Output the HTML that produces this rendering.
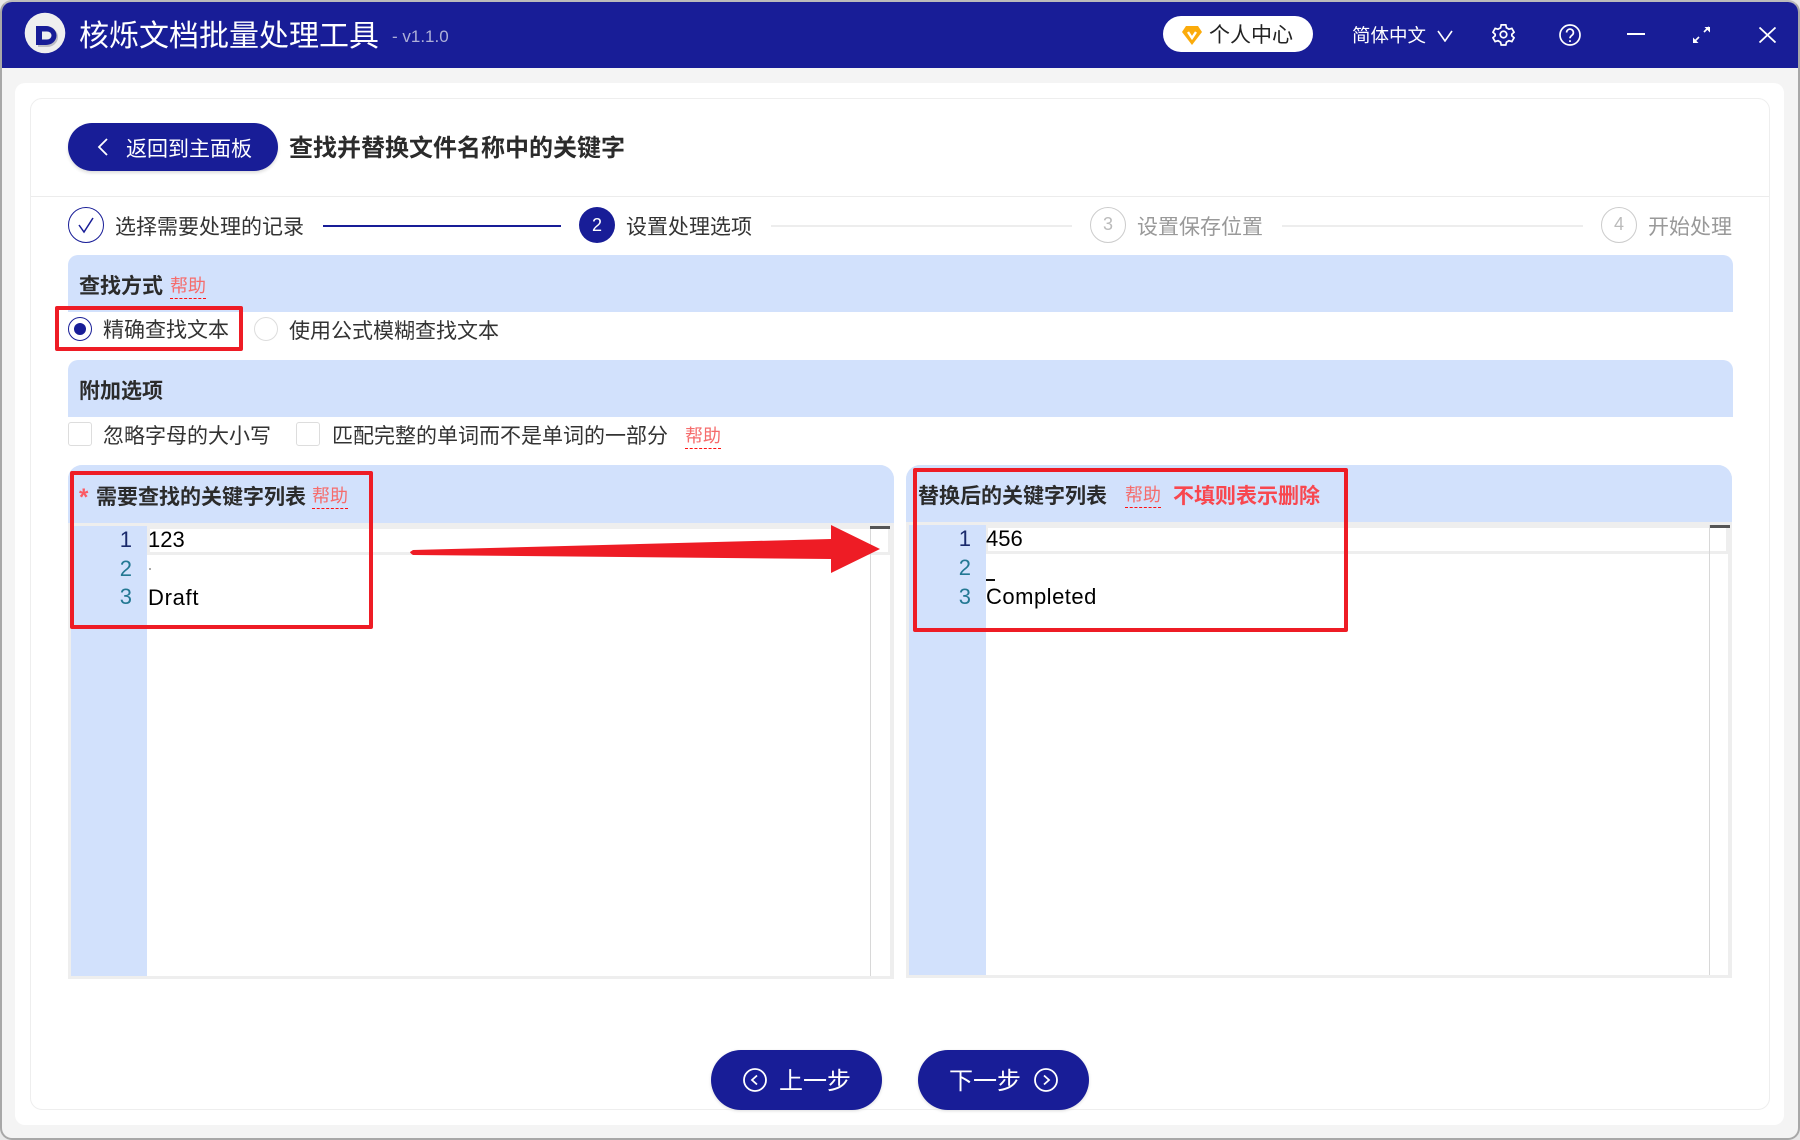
<!DOCTYPE html>
<html lang="zh"><head><meta charset="utf-8"><title>核烁文档批量处理工具</title>
<style>
*{box-sizing:border-box;margin:0;padding:0}
html,body{width:1800px;height:1140px;overflow:hidden;background:#e8e8e8;font-family:"Liberation Sans","Noto Sans CJK SC",sans-serif;color:#333}
.a{position:absolute}
.t{position:absolute;white-space:nowrap;line-height:30px;height:30px;font-size:21px;margin-top:2px}
.b{font-weight:700;color:#2b2b2b}
.h{position:absolute;white-space:nowrap;font-size:18px;line-height:24px;color:#f56c6c;border-bottom:1px dashed #f11;height:25px}
.band{position:absolute;background:#d2e1fc}
.c{position:absolute;width:36px;height:36px;border-radius:50%;text-align:center;line-height:36px;font-size:18px}
.red{position:absolute;border:4px solid #ee1c25;border-radius:2px}
.n{position:absolute;font-size:22px;line-height:28px;width:30px;text-align:right;color:#237893}
.code{position:absolute;font-size:22px;line-height:28px;color:#000;white-space:nowrap}
.pill{position:absolute;background:#181d97;color:#fff;border-radius:30px}
</style></head><body>
<div class="a" style="left:0;top:0;width:1800px;height:1140px;background:#f4f4f4;border:2px solid #a8a8a8;border-top-color:#bbb;border-radius:12px"></div>

<div class="a" style="left:2px;top:2px;width:1796px;height:66px;background:#181d97;border-radius:10px 10px 0 0"></div>
<svg class="a" style="left:24px;top:12px" width="42" height="42" viewBox="0 0 42 42"><circle cx="21" cy="21" r="20.300" fill="#efefef"/><path d="M14 15h9a11 10 0 0 1 0 20h-9z" fill="#bdbdc4"/><path d="M12 14h10a10.500 9.500 0 0 1 0 19H12z" fill="#181d97"/><path d="M18 19.500h5a4.500 4 0 0 1 0 8h-5z" fill="#efefef"/></svg>
<div class="t" style="left:79px;top:14px;font-size:30px;line-height:42px;height:42px;color:#fff">核烁文档批量处理工具</div>
<div class="t" style="left:392px;top:20px;font-size:17px;color:#aeb0d8">- v1.1.0</div>

<div class="a" style="left:1163px;top:16px;width:150px;height:36px;background:#fff;border-radius:18px"></div>
<svg class="a" style="left:1182px;top:26px" width="20" height="19" viewBox="0 0 20 19"><path d="M4 0h12l4 6-10 13L0 6z" fill="#fbab0b"/><path d="M6 6l4 6 4-6" fill="none" stroke="#fff" stroke-width="2.400"/></svg>
<div class="t" style="left:1209px;top:19px;color:#222">个人中心</div>
<div class="t" style="left:1352px;top:19px;font-size:18.500px;color:#fff">简体中文</div>
<svg class="a" style="left:1436px;top:30px" width="18" height="12" viewBox="0 0 18 12"><path d="M2 1l7 10 7-10" fill="none" stroke="#fff" stroke-width="1.600"/></svg>
<svg class="a" style="left:1492px;top:23px" width="23" height="23" viewBox="0 0 24 24" fill="none" stroke="#fff" stroke-width="1.800"><path d="M9.600 2h4.800l.7 3 2.600 1.500 3-.9 2.300 4-2.300 2.100v1.600l2.300 2.100-2.300 4-3-.9-2.600 1.500-.7 3H9.600l-.7-3-2.600-1.500-3 .9-2.300-4 2.300-2.100v-1.600L1 9.600l2.300-4 3 .9L8.900 5z"/><circle cx="12" cy="12" r="3.400"/></svg>
<svg class="a" style="left:1558px;top:23px" width="24" height="24" viewBox="0 0 24 24" fill="none" stroke="#fff" stroke-width="1.700"><circle cx="12" cy="12" r="10"/><path d="M8.600 9.500a3.400 3.400 0 1 1 5.300 2.800c-1.300.9-1.900 1.500-1.900 3"/><path d="M12 17.200v1.800"/></svg>
<div class="a" style="left:1627px;top:33px;width:18px;height:2px;background:#fff"></div>
<svg class="a" style="left:1692px;top:26px" width="19" height="18" viewBox="0 0 19 18"><path d="M12 6l5-5M2 16l5-5" fill="none" stroke="#fff" stroke-width="1.600"/><path d="M12.500 1h5.500v5.500zM1 11.500V17h5.500z" fill="#fff"/></svg>
<svg class="a" style="left:1759px;top:27px" width="17" height="16" viewBox="0 0 17 16" fill="none" stroke="#fff" stroke-width="1.800"><path d="M.5 .5l16 15M16.500 .5l-16 15"/></svg>

<div class="a" style="left:15px;top:83px;width:1769px;height:1042px;background:#fff;border-radius:10px"></div>
<div class="a" style="left:30px;top:98px;width:1740px;height:1012px;border:1px solid #eee;border-radius:12px"></div>
<div class="a" style="left:31px;top:196px;width:1738px;height:1px;background:#ececec"></div>

<div class="pill" style="left:68px;top:123px;width:210px;height:48px;box-shadow:0 2px 3px #ddd"></div>
<svg class="a" style="left:96px;top:137px" width="14" height="20" viewBox="0 0 14 20"><path d="M11 2L3 10l8 8" fill="none" stroke="#fff" stroke-width="1.800"/></svg>
<div class="t" style="left:126px;top:133px;color:#fff">返回到主面板</div>
<div class="t b" style="left:289px;top:132px;font-size:24px">查找并替换文件名称中的关键字</div>

<div class="c" style="left:68px;top:207px;border:1.500px solid #181d97"></div>
<svg class="a" style="left:76px;top:215px" width="20" height="20" viewBox="0 0 20 20"><path d="M3 10l5 7L17 3" fill="none" stroke="#181d97" stroke-width="1.500"/></svg>
<div class="t" style="left:115px;top:211px">选择需要处理的记录</div>
<div class="a" style="left:323px;top:225px;width:238px;height:2px;background:#181d97"></div>
<div class="c" style="left:579px;top:207px;background:#181d97;color:#fff">2</div>
<div class="t" style="left:626px;top:211px">设置处理选项</div>
<div class="a" style="left:771px;top:225px;width:301px;height:2px;background:#ededed"></div>
<div class="c" style="left:1090px;top:207px;border:1.500px solid #ccc;color:#bbb;line-height:33px">3</div>
<div class="t" style="left:1137px;top:211px;color:#999">设置保存位置</div>
<div class="a" style="left:1282px;top:225px;width:301px;height:2px;background:#ededed"></div>
<div class="c" style="left:1601px;top:207px;border:1.500px solid #ccc;color:#bbb;line-height:33px">4</div>
<div class="t" style="left:1648px;top:211px;color:#999">开始处理</div>

<div class="band" style="left:68px;top:255px;width:1665px;height:57px;border-radius:10px 10px 0 0"></div>
<div class="t b" style="left:79px;top:270px">查找方式</div>
<div class="h" style="left:170px;top:274px">帮助</div>

<div class="a" style="left:68px;top:317px;width:24px;height:24px;border:1.500px solid #181d97;border-radius:50%"></div>
<div class="a" style="left:74px;top:323px;width:12px;height:12px;background:#181d97;border-radius:50%"></div>
<div class="t" style="left:103px;top:314px">精确查找文本</div>
<div class="a" style="left:254px;top:317px;width:24px;height:24px;border:1px solid #ddd;border-radius:50%"></div>
<div class="t" style="left:289px;top:315px">使用公式模糊查找文本</div>
<div class="red" style="left:55px;top:306px;width:188px;height:45px"></div>

<div class="band" style="left:68px;top:360px;width:1665px;height:57px;border-radius:10px 10px 0 0"></div>
<div class="t b" style="left:79px;top:375px">附加选项</div>

<div class="a" style="left:68px;top:422px;width:24px;height:24px;border:1px solid #ddd;border-radius:3px"></div>
<div class="t" style="left:103px;top:420px">忽略字母的大小写</div>
<div class="a" style="left:296px;top:422px;width:24px;height:24px;border:1px solid #ddd;border-radius:3px"></div>
<div class="t" style="left:332px;top:420px">匹配完整的单词而不是单词的一部分</div>
<div class="h" style="left:685px;top:424px">帮助</div>

<!-- left panel -->
<div class="a" style="left:68px;top:465px;width:826px;height:514px;background:#eee;border-radius:14px 14px 0 0"></div>
<div class="band" style="left:68px;top:465px;width:826px;height:58px;border-radius:14px 14px 0 0"></div>
<div class="a" style="left:71px;top:526px;width:819px;height:450px;background:#fff"></div>
<div class="a" style="left:71px;top:526px;width:76px;height:450px;background:#d2e1fc"></div>
<div class="a" style="left:147px;top:526px;width:743px;height:29px;background:#eee"></div>
<div class="a" style="left:150px;top:529px;width:738px;height:23px;background:#fff"></div>
<div class="a" style="left:870px;top:526px;width:1px;height:450px;background:#d8d8d8"></div>
<div class="a" style="left:870px;top:526px;width:20px;height:3px;background:#555"></div>
<div class="t" style="left:79px;top:481px;color:#fb5a64;font-weight:700;font-size:24px">*</div>
<div class="t b" style="left:96px;top:481px">需要查找的关键字列表</div>
<div class="h" style="left:312px;top:484px">帮助</div>
<div class="n" style="left:102px;top:526px;color:#1a2a6c">1</div>
<div class="n" style="left:102px;top:555px">2</div>
<div class="n" style="left:102px;top:583px">3</div>
<div class="code" style="left:148px;top:526px">123</div>
<div class="a" style="left:149px;top:568px;width:2px;height:2px;background:#aaa"></div>
<div class="code" style="left:148px;top:584px;letter-spacing:.7px">Draft</div>
<div class="red" style="left:70px;top:471px;width:303px;height:158px"></div>

<!-- right panel -->
<div class="a" style="left:906px;top:465px;width:826px;height:513px;background:#eee;border-radius:14px 14px 0 0"></div>
<div class="band" style="left:906px;top:465px;width:826px;height:57px;border-radius:14px 14px 0 0"></div>
<div class="a" style="left:909px;top:525px;width:819px;height:450px;background:#fff"></div>
<div class="a" style="left:909px;top:525px;width:77px;height:450px;background:#d2e1fc"></div>
<div class="a" style="left:986px;top:525px;width:742px;height:29px;background:#eee"></div>
<div class="a" style="left:988px;top:528px;width:738px;height:23px;background:#fff"></div>
<div class="a" style="left:1709px;top:525px;width:1px;height:450px;background:#d8d8d8"></div>
<div class="a" style="left:1710px;top:525px;width:20px;height:3px;background:#555"></div>
<div class="t b" style="left:918px;top:480px">替换后的关键字列表</div>
<div class="h" style="left:1125px;top:483px">帮助</div>
<div class="t" style="left:1173px;top:480px;color:#f8474f;font-weight:700">不填则表示删除</div>
<div class="n" style="left:941px;top:525px;color:#1a2a6c">1</div>
<div class="n" style="left:941px;top:554px">2</div>
<div class="n" style="left:941px;top:583px">3</div>
<div class="code" style="left:986px;top:525px">456</div>
<div class="a" style="left:986px;top:579px;width:9px;height:1.500px;background:#111"></div>
<div class="code" style="left:986px;top:583px;letter-spacing:.5px">Completed</div>
<div class="red" style="left:913px;top:468px;width:435px;height:164px"></div>

<svg class="a" style="left:405px;top:520px" width="480" height="58" viewBox="0 0 480 58"><path d="M5 32Q5 33 8 35L426 39V53L475 29L426 5V19L8 30Z" fill="#ee1c25"/></svg>

<!-- bottom -->
<div class="pill" style="left:711px;top:1050px;width:171px;height:60px;box-shadow:0 1px 3px #ddd"></div>
<svg class="a" style="left:742px;top:1067px" width="26" height="26" viewBox="0 0 26 26" fill="none" stroke="#fff" stroke-width="1.800"><circle cx="13" cy="13" r="11"/><path d="M15 8.500l-5 4.500 5 4.500"/></svg>
<div class="t" style="left:779px;top:1065px;font-size:24px;color:#fff">上一步</div>
<div class="pill" style="left:918px;top:1050px;width:171px;height:60px;box-shadow:0 1px 3px #ddd"></div>
<div class="t" style="left:949px;top:1065px;font-size:24px;color:#fff">下一步</div>
<svg class="a" style="left:1033px;top:1067px" width="26" height="26" viewBox="0 0 26 26" fill="none" stroke="#fff" stroke-width="1.800"><circle cx="13" cy="13" r="11"/><path d="M11 8.500l5 4.500-5 4.500"/></svg>
</body></html>
